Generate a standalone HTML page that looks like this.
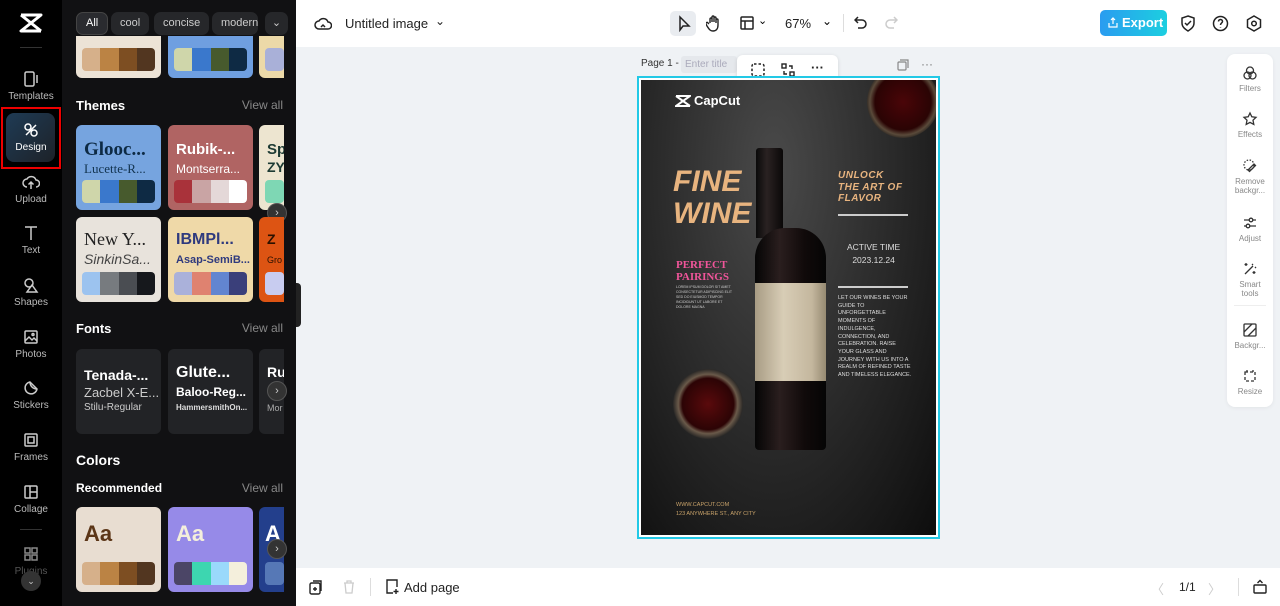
<!DOCTYPE html>
<html><head><meta charset="utf-8"><style>
*{margin:0;padding:0;box-sizing:border-box}
body{width:1280px;height:606px;overflow:hidden;font-family:"Liberation Sans",sans-serif;background:#eff2f5;position:relative}
.abs{position:absolute}
.nav{left:0;top:0;width:62px;height:606px;background:#000}
.ni{position:absolute;left:0;width:62px;text-align:center;color:#bbb;font-size:10px}
.ni svg{display:block;margin:0 auto 3px}
.panel{left:62px;top:0;width:234px;height:606px;background:#111113;overflow:hidden}
.chip{position:absolute;top:12px;height:23px;border-radius:7px;background:#26272a;color:#ccc;font-size:11px;line-height:23px;padding:0 9px}
.h{position:absolute;left:14px;color:#fff;font-weight:bold;font-size:13px}
.va{position:absolute;right:13px;color:#888;font-size:12px}
.card{position:absolute;width:85px;height:85px;border-radius:6px;overflow:hidden}
.pal{position:absolute;left:6px;right:6px;height:23px;border-radius:4px;overflow:hidden;display:flex}
.pal i{flex:1}
.t1{position:absolute;left:8px;font-size:17px;font-weight:bold;white-space:nowrap}
.t2{position:absolute;left:8px;font-size:12px;white-space:nowrap}
.arrow{position:absolute;width:20px;height:20px;border-radius:50%;background:#333;border:1px solid #555;color:#ccc;font-size:11px;text-align:center;line-height:18px}
.top{left:296px;top:0;width:984px;height:47px;background:#fff}
.bot{left:296px;top:568px;width:984px;height:38px;background:#fff}
.rt{left:1227px;top:54px;width:46px;height:353px;background:#fff;border-radius:8px;box-shadow:0 1px 4px rgba(0,0,0,.06)}
.ri{position:absolute;left:0;width:46px;text-align:center;font-size:8px;color:#888;line-height:9px}
.ri svg{display:block;margin:0 auto 3px}
</style></head><body>

<div class="abs nav">
  <svg class="abs" style="left:19px;top:13px" width="24" height="20" viewBox="0 0 24 20"><path d="M2 2h20L2 18h20M2 2l20 16" stroke="#fff" stroke-width="3" fill="none" stroke-linejoin="round"/></svg>
  <div class="abs" style="left:20px;top:47px;width:22px;height:1px;background:#333"></div>
  <div class="ni" style="top:70px"><svg width="18" height="18" viewBox="0 0 18 18" fill="none" stroke="#ccc" stroke-width="1.5"><rect x="3" y="2" width="9" height="14" rx="1.5"/><path d="M15 5v8"/></svg>Templates</div>
  <div class="abs" style="left:1px;top:107px;width:60px;height:62px;border:2px solid #e00"></div>
  <div class="abs" style="left:6px;top:113px;width:49px;height:49px;border-radius:8px;background:linear-gradient(135deg,#1f3b55,#1d2228)"></div>
  <div class="ni" style="top:121px;color:#fff"><svg width="18" height="18" viewBox="0 0 18 18" fill="none" stroke="#fff" stroke-width="1.5"><circle cx="6" cy="6" r="3"/><circle cx="12" cy="12" r="3"/><path d="M4 14L14 4"/></svg>Design</div>
  <div class="ni" style="top:173px"><svg width="18" height="18" viewBox="0 0 18 18" fill="none" stroke="#ccc" stroke-width="1.5"><path d="M5 14a4 4 0 010-8 5 5 0 019 1 3.5 3.5 0 010 7M9 9v7M6.5 11.5L9 9l2.5 2.5"/></svg>Upload</div>
  <div class="ni" style="top:224px"><svg width="18" height="18" viewBox="0 0 18 18" fill="none" stroke="#ccc" stroke-width="1.5"><path d="M3 3h12M9 3v13"/></svg>Text</div>
  <div class="ni" style="top:276px"><svg width="18" height="18" viewBox="0 0 18 18" fill="none" stroke="#ccc" stroke-width="1.5"><circle cx="7" cy="7" r="4"/><path d="M10 9l5 7H5z"/></svg>Shapes</div>
  <div class="ni" style="top:328px"><svg width="18" height="18" viewBox="0 0 18 18" fill="none" stroke="#ccc" stroke-width="1.5"><rect x="3" y="3" width="12" height="12" rx="1"/><path d="M3 13l4-4 3 3 2-2 3 3"/><circle cx="11" cy="6.5" r="1"/></svg>Photos</div>
  <div class="ni" style="top:379px"><svg width="18" height="18" viewBox="0 0 18 18" fill="none" stroke="#ccc" stroke-width="1.5"><path d="M15 10A6 6 0 118 3l7 7zM8 3c0 4 3 7 7 7"/></svg>Stickers</div>
  <div class="ni" style="top:431px"><svg width="18" height="18" viewBox="0 0 18 18" fill="none" stroke="#ccc" stroke-width="1.5"><rect x="3" y="3" width="12" height="12" rx="1"/><rect x="6" y="6" width="6" height="6"/></svg>Frames</div>
  <div class="ni" style="top:483px"><svg width="18" height="18" viewBox="0 0 18 18" fill="none" stroke="#ccc" stroke-width="1.5"><rect x="3" y="3" width="12" height="12" rx="1"/><path d="M8 3v12M8 9h7"/></svg>Collage</div>
  <div class="abs" style="left:20px;top:529px;width:22px;height:1px;background:#333"></div>
  <div class="ni" style="top:545px;color:#555"><svg width="18" height="18" viewBox="0 0 18 18" fill="none" stroke="#888" stroke-width="1.5"><rect x="3" y="3" width="5" height="5"/><rect x="10" y="3" width="5" height="5"/><rect x="3" y="10" width="5" height="5"/><rect x="10" y="10" width="5" height="5"/></svg>Plugins</div>
  <div class="abs" style="left:21px;top:571px;width:20px;height:20px;border-radius:50%;background:#333;color:#ccc;font-size:9px;text-align:center;line-height:20px">⌄</div>
</div>

<div class="abs panel">
  <div class="chip" style="left:14px;background:#2a2b2f;border:1px solid #444;color:#fff;line-height:21px">All</div>
  <div class="chip" style="left:49px">cool</div>
  <div class="chip" style="left:92px">concise</div>
  <div class="chip" style="left:150px;width:46px;overflow:hidden">modern</div>
  <div class="chip" style="left:203px;width:23px;padding:0;text-align:center">⌄</div>

  <div class="card" style="left:14px;top:36px;height:42px;background:#ece3d6;border-radius:0 0 6px 6px"><div class="pal" style="top:12px"><i style="background:#d6b08a"></i><i style="background:#bb8344"></i><i style="background:#7d4e22"></i><i style="background:#523620"></i></div></div>
  <div class="card" style="left:106px;top:36px;height:42px;background:#6f9fe0;border-radius:0 0 6px 6px"><div class="pal" style="top:12px"><i style="background:#cfd6aa"></i><i style="background:#3a78cc"></i><i style="background:#475a2d"></i><i style="background:#0e2a44"></i></div></div>
  <div class="card" style="left:197px;top:36px;height:42px;width:25px;background:#ecd9a8;border-radius:0 0 0 6px"><div class="pal" style="top:12px;right:0;background:#a9b0d8"></div></div>

  <div class="h" style="top:98px">Themes</div><div class="va" style="top:98px">View all</div>
  <div class="card" style="left:14px;top:125px;background:#76a4df"><div class="t1" style="top:14px;font-family:'Liberation Serif',serif;font-size:19px;color:#0d2a44">Glooc...</div><div class="t2" style="top:36px;font-family:'Liberation Serif',serif;color:#12334f;font-size:13px">Lucette-R...</div><div class="pal" style="top:55px"><i style="background:#cfd6aa"></i><i style="background:#3a78cc"></i><i style="background:#475a2d"></i><i style="background:#0e2a44"></i></div></div>
  <div class="card" style="left:106px;top:125px;background:#b06463"><div class="t1" style="top:16px;color:#fff;font-size:15px">Rubik-...</div><div class="t2" style="top:37px;color:#fff">Montserra...</div><div class="pal" style="top:55px"><i style="background:#a9323a"></i><i style="background:#c9a4a4"></i><i style="background:#e4d8d8"></i><i style="background:#fff"></i></div></div>
  <div class="card" style="left:197px;top:125px;width:25px;background:#ede5d0;border-radius:6px 0 0 6px"><div class="t1" style="top:16px;left:8px;color:#1c3a33;font-size:15px">Sp</div><div class="t1" style="top:34px;left:8px;color:#1c3a33;font-size:14px">ZY</div><div class="pal" style="top:55px;right:0;background:#7ed7b4"></div></div>
  <div class="arrow" style="left:205px;top:203px">›</div>

  <div class="card" style="left:14px;top:217px;background:#e8e3dc"><div class="t1" style="top:12px;font-family:'Liberation Serif',serif;font-weight:normal;font-size:18px;color:#222">New Y...</div><div class="t2" style="top:34px;font-style:italic;color:#444;font-size:14px">SinkinSa...</div><div class="pal" style="top:55px"><i style="background:#9cc3ef"></i><i style="background:#777b7f"></i><i style="background:#4a4d52"></i><i style="background:#16181c"></i></div></div>
  <div class="card" style="left:106px;top:217px;background:#efd9a8"><div class="t1" style="top:14px;color:#2f3a7e;font-size:16px">IBMPl...</div><div class="t2" style="top:37px;color:#2f3a7e;font-weight:bold;font-size:11px">Asap-SemiB...</div><div class="pal" style="top:55px"><i style="background:#aab1da"></i><i style="background:#df8270"></i><i style="background:#6285d0"></i><i style="background:#3a3f7a"></i></div></div>
  <div class="card" style="left:197px;top:217px;width:25px;background:#dd5413;border-radius:6px 0 0 6px"><div class="t1" style="top:14px;left:8px;color:#2a1100;font-size:14px">Z</div><div class="t2" style="top:38px;left:8px;color:#2a1100;font-size:9px">Gro</div><div class="pal" style="top:55px;right:0;background:#c8ccf0"></div></div>

  <div class="h" style="top:321px">Fonts</div><div class="va" style="top:321px">View all</div>
  <div class="card" style="left:14px;top:349px;background:#222326"><div class="t1" style="top:18px;color:#fff;font-size:14px">Tenada-...</div><div class="t2" style="top:36px;color:#ccc;font-size:13px">Zacbel X-E...</div><div class="t2" style="top:53px;color:#ccc;font-size:10px">Stilu-Regular</div></div>
  <div class="card" style="left:106px;top:349px;background:#222326"><div class="t1" style="top:15px;color:#fff;font-size:16px">Glute...</div><div class="t2" style="top:36px;color:#fff;font-weight:bold;font-size:12px">Baloo-Reg...</div><div class="t2" style="top:54px;color:#ddd;font-size:8px;font-weight:bold">HammersmithOn...</div></div>
  <div class="card" style="left:197px;top:349px;width:25px;background:#222326;border-radius:6px 0 0 6px"><div class="t1" style="top:15px;left:8px;color:#fff;font-size:14px">Ru</div><div class="t2" style="top:54px;left:8px;color:#aaa;font-size:9px">Mor</div></div>
  <div class="arrow" style="left:205px;top:381px">›</div>

  <div class="h" style="top:452px;font-size:14px">Colors</div>
  <div class="h" style="top:481px;font-size:12px">Recommended</div><div class="va" style="top:481px">View all</div>
  <div class="card" style="left:14px;top:507px;background:#e8ddd1"><div class="t1" style="top:14px;color:#5b3517;font-size:22px">Aa</div><div class="pal" style="top:55px"><i style="background:#d6b08a"></i><i style="background:#bb8344"></i><i style="background:#7d4e22"></i><i style="background:#523620"></i></div></div>
  <div class="card" style="left:106px;top:507px;background:#968ae8"><div class="t1" style="top:14px;color:#f4efdc;font-size:22px">Aa</div><div class="pal" style="top:55px"><i style="background:#4b4566"></i><i style="background:#3dd6b0"></i><i style="background:#9ad9fb"></i><i style="background:#f4efdc"></i></div></div>
  <div class="card" style="left:197px;top:507px;width:25px;background:#233f8c;border-radius:6px 0 0 6px"><div class="t1" style="top:14px;left:6px;color:#fff;font-size:22px">A</div><div class="pal" style="top:55px;right:0;background:#5678b6"></div></div>
  <div class="arrow" style="left:205px;top:539px">›</div>
</div>
<div class="abs" style="left:296px;top:283px;width:5px;height:44px;background:#222;border-radius:0 4px 4px 0"></div>

<div class="abs top">
  <svg class="abs" style="left:18px;top:15px" width="18" height="18" viewBox="0 0 18 18" fill="none" stroke="#222" stroke-width="1.5"><path d="M5 14a4 4 0 010-8 5 5 0 019 1 3.5 3.5 0 010 7z"/><path d="M7 12l2-2 2 2"/></svg>
  <div class="abs" style="left:49px;top:16px;font-size:13px;color:#222">Untitled image</div>
  <div class="abs" style="left:139px;top:14px;font-size:12px;color:#222">⌄</div>
  <div class="abs" style="left:374px;top:11px;width:26px;height:25px;border-radius:5px;background:#e9ecf0"></div>
  <svg class="abs" style="left:380px;top:15px" width="16" height="17" viewBox="0 0 16 17" fill="none" stroke="#222" stroke-width="1.5"><path d="M4 2v13l3-4h6z"/></svg>
  <svg class="abs" style="left:410px;top:14px" width="16" height="18" viewBox="0 0 16 18" fill="none" stroke="#222" stroke-width="1.4"><path d="M4 9V5a1 1 0 012 0v3V3a1 1 0 012 0v5V4a1 1 0 012 0v5-3a1 1 0 012 0v5c0 4-2 6-5 6s-4-2-6-5l-1-2a1 1 0 012-1l1 1"/></svg>
  <svg class="abs" style="left:444px;top:16px" width="14" height="14" viewBox="0 0 14 14" fill="none" stroke="#222" stroke-width="1.5"><rect x="1" y="1" width="12" height="12" rx="1"/><path d="M1 5h12M5 5v8"/></svg>
  <div class="abs" style="left:462px;top:14px;font-size:11px">⌄</div>
  <div class="abs" style="left:489px;top:16px;font-size:13px;color:#222">67%</div>
  <div class="abs" style="left:526px;top:14px;font-size:12px">⌄</div>
  <div class="abs" style="left:547px;top:14px;width:1px;height:18px;background:#ddd"></div>
  <svg class="abs" style="left:558px;top:15px" width="14" height="16" viewBox="0 0 14 16" fill="none" stroke="#222" stroke-width="1.5"><path d="M4 2L1 5l3 3M1 5h7a4 4 0 010 8H4"/></svg>
  <svg class="abs" style="left:588px;top:15px" width="14" height="16" viewBox="0 0 14 16" fill="none" stroke="#ccc" stroke-width="1.5"><path d="M10 2l3 3-3 3M13 5H6a4 4 0 000 8h4"/></svg>
  <div class="abs" style="left:804px;top:10px;width:67px;height:26px;border-radius:5px;background:linear-gradient(90deg,#2a9cf0,#1ccfe0);color:#fff;font-size:13px;font-weight:bold;line-height:26px;padding-left:22px">Export</div>
  <svg class="abs" style="left:812px;top:17px" width="10" height="11" viewBox="0 0 10 11" fill="none" stroke="#fff" stroke-width="1.2"><path d="M5 1v6M3 3l2-2 2 2M1 6v4h8V6"/></svg>
  <svg class="abs" style="left:884px;top:15px" width="16" height="17" viewBox="0 0 16 17" fill="none" stroke="#222" stroke-width="1.5"><path d="M8 1l6 2v5c0 4-3 6-6 8-3-2-6-4-6-8V3z"/><path d="M5 8l2 2 4-4"/></svg>
  <svg class="abs" style="left:916px;top:15px" width="17" height="17" viewBox="0 0 17 17" fill="none" stroke="#222" stroke-width="1.5"><circle cx="8.5" cy="8.5" r="7"/><path d="M6.5 6.5a2 2 0 114 0c0 1.5-2 1.5-2 3.5M8.5 12v.5"/></svg>
  <svg class="abs" style="left:950px;top:15px" width="16" height="17" viewBox="0 0 16 17" fill="none" stroke="#222" stroke-width="1.5"><path d="M8 1l6.5 3.75v7.5L8 16l-6.5-3.75v-7.5z"/><circle cx="8" cy="8.5" r="2.3"/></svg>
</div>

<div class="abs" style="left:641px;top:58px;font-size:10px;color:#333">Page 1 -</div>
<div class="abs" style="left:681px;top:56px;width:56px;height:17px;background:#e5e8ec;border-radius:3px;font-size:10px;color:#aab;line-height:17px;padding-left:4px">Enter title</div>
<div class="abs" style="left:737px;top:55px;width:101px;height:30px;background:#fff;border-radius:6px;box-shadow:0 1px 4px rgba(0,0,0,.12)"></div>
<svg class="abs" style="left:751px;top:63px" width="14" height="14" viewBox="0 0 14 14" fill="none" stroke="#222" stroke-width="1.5" stroke-dasharray="2.5 2"><rect x="1" y="1" width="12" height="12" rx="2"/></svg>
<svg class="abs" style="left:781px;top:63px" width="14" height="14" viewBox="0 0 14 14" fill="none" stroke="#222" stroke-width="1.4"><rect x="1" y="1" width="4" height="4"/><rect x="9" y="9" width="4" height="4"/><path d="M8 3h3v3M6 11H3V8"/></svg>
<div class="abs" style="left:811px;top:60px;font-size:13px;font-weight:bold;color:#222">···</div>
<svg class="abs" style="left:897px;top:59px" width="12" height="12" viewBox="0 0 12 12" fill="none" stroke="#888" stroke-width="1.2"><rect x="1" y="3" width="8" height="8" rx="1"/><path d="M3 1h8v8"/></svg>
<div class="abs" style="left:921px;top:57px;font-size:12px;color:#777">···</div>

<div class="abs" style="left:637px;top:76px;width:303px;height:463px;border:2px solid #22c9e6;background:#fff"></div>
<div class="abs" style="left:641px;top:80px;width:295px;height:455px;background:radial-gradient(ellipse at 45% 20%,#4a4a4a 0%,#2e2e2e 45%,#0d0d0d 100%);overflow:hidden">
  <svg class="abs" style="left:34px;top:15px" width="16" height="12" viewBox="0 0 16 12"><path d="M1 1h14L1 11h14M1 1l14 10" stroke="#fff" stroke-width="2" fill="none"/></svg>
  <div class="abs" style="left:53px;top:13px;color:#fff;font-size:13px;font-weight:bold">CapCut</div>
  <div class="abs" style="left:226px;top:-14px;width:72px;height:72px;border-radius:50%;background:radial-gradient(circle,#4a0508 0%,#2a0404 55%,#5a4a3a 65%,#1a1a1a 75%)"></div>
  <div class="abs" style="left:32px;top:86px;color:#e8b47f;font-size:30px;font-weight:bold;font-style:italic;line-height:32px">FINE<br>WINE</div>
  <div class="abs" style="left:197px;top:90px;color:#e8b47f;font-size:10px;font-weight:bold;font-style:italic;line-height:11.5px;letter-spacing:.5px">UNLOCK<br>THE ART OF<br>FLAVOR</div>
  <div class="abs" style="left:197px;top:134px;width:70px;height:1.5px;background:#ccc"></div>
  <div class="abs" style="left:206px;top:161px;color:#ddd;font-size:8.5px;text-align:center;line-height:13px">ACTIVE TIME<br>2023.12.24</div>
  <div class="abs" style="left:197px;top:206px;width:70px;height:1.5px;background:#ccc"></div>
  <div class="abs" style="left:197px;top:215px;color:#ddd;font-size:5.5px;line-height:7.7px;width:75px">LET OUR WINES BE YOUR GUIDE TO UNFORGETTABLE MOMENTS OF INDULGENCE, CONNECTION, AND CELEBRATION. RAISE YOUR GLASS AND JOURNEY WITH US INTO A REALM OF REFINED TASTE AND TIMELESS ELEGANCE.</div>
  <div class="abs" style="left:35px;top:179px;color:#f0559a;font-size:11px;font-weight:bold;font-family:'Liberation Serif',serif;line-height:12px">PERFECT<br>PAIRINGS</div>
  <div class="abs" style="left:35px;top:205px;color:#ccc;font-size:3.5px;line-height:5px;width:60px">LOREM IPSUM DOLOR SIT AMET CONSECTETUR ADIPISCING ELIT SED DO EIUSMOD TEMPOR INCIDIDUNT UT LABORE ET DOLORE MAGNA</div>
  <div class="abs" style="left:115px;top:68px;width:27px;height:90px;background:linear-gradient(90deg,#0a0a0a,#2a2222 40%,#0a0808);border-radius:3px 3px 0 0"></div>
  <div class="abs" style="left:114px;top:148px;width:71px;height:222px;background:linear-gradient(90deg,#050505,#2a1e1e 35%,#100a0a 70%,#050505);border-radius:30px 30px 4px 4px"></div>
  <div class="abs" style="left:114px;top:203px;width:71px;height:98px;background:linear-gradient(90deg,#a89c84,#d8cdb6 40%,#c4b79e 80%,#968a72)"></div>
  <div class="abs" style="left:32px;top:289px;width:70px;height:70px;border-radius:50%;background:radial-gradient(circle,#5a0a0c 0%,#2c0405 52%,#6a5a4a 60%,#222 72%)"></div>
  <div class="abs" style="left:35px;top:421px;color:#c9a36a;font-size:5.5px;line-height:8.5px">WWW.CAPCUT.COM<br>123 ANYWHERE ST., ANY CITY</div>
</div>

<div class="abs rt">
  <div class="ri" style="top:11px"><svg width="16" height="16" viewBox="0 0 16 16" fill="none" stroke="#333" stroke-width="1.3"><circle cx="8" cy="5.5" r="3.5"/><circle cx="5.5" cy="10.5" r="3.5"/><circle cx="10.5" cy="10.5" r="3.5"/></svg>Filters</div>
  <div class="ri" style="top:57px"><svg width="16" height="16" viewBox="0 0 16 16" fill="none" stroke="#333" stroke-width="1.3"><path d="M8 2l1.8 3.8 4.2.5-3 2.9.8 4.2L8 11.4 4.2 13.4 5 9.2 2 6.3l4.2-.5z"/></svg>Effects</div>
  <div class="ri" style="top:104px"><svg width="16" height="16" viewBox="0 0 16 16" fill="none" stroke="#333" stroke-width="1.3"><circle cx="7" cy="7" r="5" stroke-dasharray="1.5 1.5"/><path d="M6 12l6-6 1.5 1.5-6 6z"/></svg>Remove<br>backgr...</div>
  <div class="ri" style="top:161px"><svg width="16" height="16" viewBox="0 0 16 16" fill="none" stroke="#333" stroke-width="1.3"><path d="M2 5h12M2 11h12"/><circle cx="9" cy="5" r="1.8" fill="#fff"/><circle cx="6" cy="11" r="1.8" fill="#fff"/></svg>Adjust</div>
  <div class="ri" style="top:207px"><svg width="16" height="16" viewBox="0 0 16 16" fill="none" stroke="#333" stroke-width="1.3"><path d="M3 13l8-8M10 3l1 1M13 6l1 1M4 2v3M2.5 3.5h3M12 10v3M10.5 11.5h3"/></svg>Smart<br>tools</div>
  <div class="abs" style="left:7px;top:251px;width:32px;height:1px;background:#eee"></div>
  <div class="ri" style="top:268px"><svg width="16" height="16" viewBox="0 0 16 16" fill="none" stroke="#333" stroke-width="1.3"><rect x="2" y="2" width="12" height="12" rx="1"/><path d="M2 10l8-8M6 14l8-8"/></svg>Backgr...</div>
  <div class="ri" style="top:314px"><svg width="16" height="16" viewBox="0 0 16 16" fill="none" stroke="#333" stroke-width="1.3"><path d="M3 4h10v9H3z" stroke-dasharray="3 2"/><path d="M5 2v2M11 2v2"/></svg>Resize</div>
</div>

<div class="abs bot">
  <svg class="abs" style="left:13px;top:12px" width="14" height="15" viewBox="0 0 14 15" fill="none" stroke="#222" stroke-width="1.4"><rect x="1" y="3" width="10" height="11" rx="1.5"/><path d="M4 1h8v10M6 7v4M4 9h4"/></svg>
  <svg class="abs" style="left:47px;top:12px" width="12" height="14" viewBox="0 0 12 14" fill="none" stroke="#ccc" stroke-width="1.3"><path d="M1 3h10M4 3V1h4v2M2 3l1 10h6l1-10"/></svg>
  <div class="abs" style="left:74px;top:10px;width:1px;height:18px;background:#ddd"></div>
  <svg class="abs" style="left:89px;top:11px" width="14" height="16" viewBox="0 0 14 16" fill="none" stroke="#222" stroke-width="1.4"><path d="M8 14H2V1h10v7M11 10v5M8.5 12.5h5"/></svg>
  <div class="abs" style="left:108px;top:12px;font-size:13px;color:#222">Add page</div>
  <div class="abs" style="left:855px;top:11px;font-size:13px;color:#ccc">〈</div>
  <div class="abs" style="left:883px;top:12px;font-size:12px;color:#222">1/1</div>
  <div class="abs" style="left:912px;top:11px;font-size:13px;color:#ccc">〉</div>
  <div class="abs" style="left:942px;top:10px;width:1px;height:18px;background:#ddd"></div>
  <svg class="abs" style="left:957px;top:11px" width="14" height="15" viewBox="0 0 14 15" fill="none" stroke="#222" stroke-width="1.4"><rect x="1" y="6" width="12" height="8" rx="1"/><path d="M4.5 4L7 1.5 9.5 4"/></svg>
</div>
</body></html>
